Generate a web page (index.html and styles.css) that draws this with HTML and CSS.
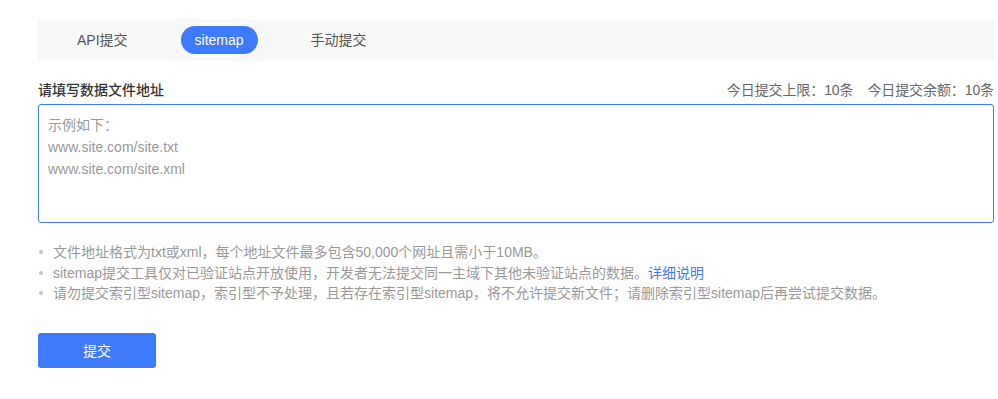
FILE: index.html
```html
<!DOCTYPE html>
<html lang="zh-CN">
<head>
    <meta charset="UTF-8">
    <meta name="viewport" content="width=device-width, initial-scale=1.0">
    <title>sitemap提交</title>
    <link rel="stylesheet" href="styles.css">
</head>
<body>
    <div class="container">
        <div class="tabs">
            <span class="tab">API提交</span>
            <span class="tab active">sitemap</span>
            <span class="tab">手动提交</span>
        </div>

        <div class="label-row">
            <label for="urls" class="label">请填写数据文件地址</label>
            <span class="quota">今日提交上限：10条<span class="sep"></span>今日提交余额：10条</span>
        </div>
        <textarea id="urls" class="urls" placeholder="示例如下：&#10;www.site.com/site.txt&#10;www.site.com/site.xml"></textarea>

        <ul class="tips">
            <li>文件地址格式为txt或xml，每个地址文件最多包含50,000个网址且需小于10MB。</li>
            <li>sitemap提交工具仅对已验证站点开放使用，开发者无法提交同一主域下其他未验证站点的数据。<a href="#" class="link">详细说明</a></li>
            <li>请勿提交索引型sitemap，索引型不予处理，且若存在索引型sitemap，将不允许提交新文件；请删除索引型sitemap后再尝试提交数据。</li>
        </ul>

        <button type="button" class="submit">提交</button>
    </div>
</body>
</html>
```

FILE: styles.css
```css
body {
    margin: 0;
    font-family: "Liberation Sans", "Noto Sans CJK SC", sans-serif;
    font-size: 14px;
    color: #333;
    background: #fff;
}
.container {
    padding: 19px 4px 0 38px;
}
.tabs {
    display: flex;
    align-items: center;
    gap: 39px;
    height: 42px;
    padding-left: 25px;
    background-color: #f8f8f8;
}
.tab {
    padding: 0 14px;
    height: 28px;
    line-height: 28px;
    border-radius: 14px;
    color: #555;
    cursor: pointer;
}
.tab.active {
    background-color: #3e7afc;
    color: #fff;
}
.label-row {
    display: flex;
    justify-content: space-between;
    align-items: center;
    line-height: 20px;
    margin: 19px 0 4px;
}
.label {
    font-weight: 500;
    color: #333;
}
.quota {
    color: #666;
    letter-spacing: -0.1px;
}
.sep {
    display: inline-block;
    width: 14px;
}
.urls {
    display: block;
    box-sizing: border-box;
    width: 100%;
    height: 119px;
    margin: 0;
    padding: 9px 9px;
    border: 1px solid #3e7afc;
    border-radius: 3px;
    font-family: inherit;
    font-size: 14px;
    line-height: 22px;
    resize: none;
    outline: none;
}
.urls::placeholder {
    color: #999;
}
.tips {
    list-style: none;
    margin: 19px 0 0;
    padding: 0;
    color: #999;
    line-height: 20.5px;
}
.tips li {
    position: relative;
    padding-left: 15px;
}
.tips li::before {
    content: "";
    position: absolute;
    left: 1px;
    top: 8px;
    width: 4px;
    height: 4px;
    border-radius: 50%;
    background-color: #c4c4c4;
}
.link {
    color: #3e7afc;
    text-decoration: none;
}
.submit {
    display: block;
    width: 118px;
    height: 35px;
    margin-top: 29px;
    border: none;
    border-radius: 3px;
    background-color: #3e7afc;
    color: #fff;
    font-family: inherit;
    font-size: 14px;
    cursor: pointer;
}
```
